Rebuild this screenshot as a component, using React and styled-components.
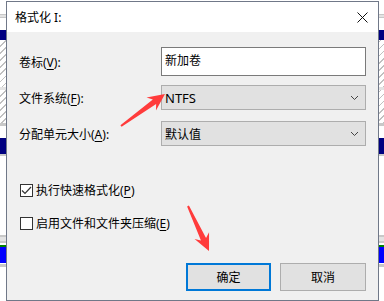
import React from "react";
import styled, { createGlobalStyle } from "styled-components";

const Global = createGlobalStyle`
  html, body { margin: 0; padding: 0; }
  body {
    width: 384px; height: 301px; overflow: hidden; background: #fff;
    font-family: "Noto Sans", "Noto Sans CJK SC", sans-serif;
  }
`;

const UI_FONT = '"Noto Sans", "Noto Sans CJK SC", sans-serif';

const Desktop = styled.div`
  position: relative;
  width: 384px;
  height: 301px;
  display: flex;
  flex-direction: column;
  overflow: hidden;
`;

const Band = styled.div`
  height: ${(p) => p.$h}px;
  flex: none;
  background: ${(p) =>
    p.$kind === "navy"
      ? "#000080"
      : p.$kind === "grey"
      ? "#c8c8c8"
      : p.$kind === "lgrey"
      ? "#e3e3e3"
      : p.$kind === "green"
      ? "#008000"
      : p.$kind === "blue"
      ? "#0000ff"
      : p.$kind === "hatch"
      ? "repeating-linear-gradient(135deg, #ffffff 0 4px, #c0c0c0 4px 5px)"
      : "#ffffff"};
`;

const Dialog = styled.div`
  position: absolute;
  left: 6px;
  top: 1px;
  width: 373px;
  height: 300px;
  box-sizing: border-box;
  border: 1px solid #707888;
  background: #f0f0f0;
  display: flex;
  flex-direction: column;
`;

const TitleBar = styled.div`
  height: 30px;
  background: #ffffff;
  display: flex;
  align-items: center;
  justify-content: space-between;
  padding: 0 10px 0 8px;
  flex: none;
`;

const Title = styled.span`
  font-family: ${UI_FONT};
  font-size: 12px;
  color: #000;
  margin-top: -1px;
`;

const CloseIcon = styled.svg`
  width: 11px;
  height: 11px;
  display: block;
`;

const Body = styled.div`
  padding: 15px 11px 0 12px;
  display: flex;
  flex-direction: column;
`;

const FormGrid = styled.div`
  display: grid;
  grid-template-columns: 142px 205px;
  align-items: center;
`;

const Label = styled.label`
  font-family: ${UI_FONT};
  font-size: 12px;
  color: #000;
  margin-top: ${(p) => p.$mt || 0}px;
  u { text-decoration: underline; text-underline-offset: 2px; }
`;

const TextInput = styled.div`
  height: 29px;
  box-sizing: border-box;
  border: 1px solid #7a7a7a;
  background: #fff;
  font-family: ${UI_FONT};
  font-size: 12px;
  padding: 3px 0 0 3px;
  color: #000;
`;

const Select = styled.div`
  height: 25px;
  box-sizing: border-box;
  border: 1px solid #adadad;
  background: #e1e1e1;
  display: flex;
  align-items: center;
  justify-content: space-between;
  padding: 0 6px 0 3px;
  margin-top: ${(p) => p.$mt || 0}px;
  font-family: ${UI_FONT};
  font-size: ${(p) => (p.$latin ? 13 : 12)}px;
  color: #000;
`;

const Chevron = styled.svg`
  width: 9px;
  height: 6px;
  display: block;
`;

const Checks = styled.div`
  display: flex;
  flex-direction: column;
  gap: 15px;
  margin-top: 35px;
  padding-left: 1px;
`;

const CheckRow = styled.div`
  display: flex;
  align-items: center;
  gap: 3px;
  font-family: ${UI_FONT};
  font-size: 12px;
  color: #000;
  u { text-decoration: underline; text-underline-offset: 2px; }
`;

const Box = styled.span`
  width: 13px;
  height: 13px;
  box-sizing: border-box;
  border: 1px solid #333;
  background: #fff;
  display: flex;
  align-items: center;
  justify-content: center;
  flex: none;
`;

const Buttons = styled.div`
  display: flex;
  justify-content: flex-end;
  gap: 9px;
  margin-top: 31px;
  padding-right: 1px;
`;

const Button = styled.button`
  width: ${(p) => (p.$primary ? 85 : 86)}px;
  height: 28px;
  box-sizing: border-box;
  border: ${(p) => (p.$primary ? "2px solid #0078d7" : "1px solid #adadad")};
  background: #e1e1e1;
  font-family: ${UI_FONT};
  font-size: 12px;
  color: #000;
  padding: 0;
`;

const Overlay = styled.svg`
  position: absolute;
  left: 0;
  top: 0;
  width: 384px;
  height: 301px;
  pointer-events: none;
`;

const Check = () => (
  <svg width="11" height="9" viewBox="0 0 11 9">
    <path d="M1 4.5 L4 7.5 L10 1" fill="none" stroke="#333" strokeWidth="1.2" />
  </svg>
);

const Down = () => (
  <Chevron viewBox="0 0 9 6">
    <path d="M1 1 L4.5 4.5 L8 1" fill="none" stroke="#444" strokeWidth="1" />
  </Chevron>
);

function Arrow({ x1, y1, x2, y2 }) {
  const dx = x2 - x1;
  const dy = y2 - y1;
  const len = Math.hypot(dx, dy);
  const ux = dx / len;
  const uy = dy / len;
  const nx = -uy;
  const ny = ux;
  const hl = 17;
  const hw = 8;
  const bx = x2 - ux * hl;
  const by = y2 - uy * hl;
  const tail = 1;
  const neck = 2.8;
  const pts = [
    [x1 + nx * tail, y1 + ny * tail],
    [bx + ux * 4 + nx * neck, by + uy * 4 + ny * neck],
    [bx + nx * hw, by + ny * hw],
    [x2, y2],
    [bx - nx * hw, by - ny * hw],
    [bx + ux * 4 - nx * neck, by + uy * 4 - ny * neck],
    [x1 - nx * tail, y1 - ny * tail],
  ];
  return <polygon points={pts.map((p) => p.join(",")).join(" ")} fill="#ff3b3b" />;
}

export default function App() {
  return (
    <>
      <Global />
      <Desktop>
        <Band $h={14} />
        <Band $h={1} $kind="grey" />
        <Band $h={2} $kind="lgrey" />
        <Band $h={1} $kind="grey" />
        <Band $h={12} />
        <Band $h={10} $kind="navy" />
        <Band $h={47} $kind="hatch" />
        <Band $h={3} $kind="lgrey" />
        <Band $h={33} $kind="hatch" />
        <Band $h={3} $kind="grey" />
        <Band $h={12} />
        <Band $h={16} $kind="navy" />
        <Band $h={2} $kind="grey" />
        <Band $h={79} />
        <Band $h={2} $kind="grey" />
        <Band $h={4} $kind="lgrey" />
        <Band $h={2} $kind="grey" />
        <Band $h={2} />
        <Band $h={2} $kind="green" />
        <Band $h={16} $kind="blue" />
        <Band $h={1} />
        <Band $h={3} $kind="grey" />
        <Band $h={40} />

        <Dialog>
          <TitleBar>
            <Title>格式化 I:</Title>
            <CloseIcon viewBox="0 0 11 11">
              <path d="M0.5 0.5 L10.5 10.5 M10.5 0.5 L0.5 10.5" stroke="#111" strokeWidth="1" />
            </CloseIcon>
          </TitleBar>
          <Body>
            <FormGrid>
              <Label>
                卷标(<u>V</u>):
              </Label>
              <TextInput>新加卷</TextInput>
              <Label $mt={9}>
                文件系统(<u>F</u>):
              </Label>
              <Select $mt={9} $latin>
                <span>NTFS</span>
                <Down />
              </Select>
              <Label $mt={11}>
                分配单元大小(<u>A</u>):
              </Label>
              <Select $mt={11}>
                <span>默认值</span>
                <Down />
              </Select>
            </FormGrid>
            <Checks>
              <CheckRow>
                <Box>
                  <Check />
                </Box>
                <span>
                  执行快速格式化(<u>P</u>)
                </span>
              </CheckRow>
              <CheckRow>
                <Box />
                <span>
                  启用文件和文件夹压缩(<u>E</u>)
                </span>
              </CheckRow>
            </Checks>
            <Buttons>
              <Button $primary>确定</Button>
              <Button>取消</Button>
            </Buttons>
          </Body>
        </Dialog>

        <Overlay viewBox="0 0 384 301">
          <Arrow x1={121} y1={126} x2={165} y2={94} />
          <Arrow x1={188} y1={206} x2={209} y2={251} />
        </Overlay>
      </Desktop>
    </>
  );
}
